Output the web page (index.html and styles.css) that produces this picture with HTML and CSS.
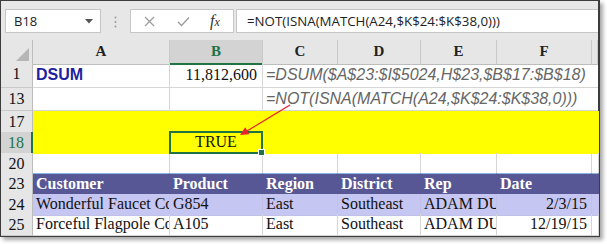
FILE: index.html
```html
<!DOCTYPE html>
<html>
<head>
<meta charset="utf-8">
<link rel="stylesheet" href="styles.css">
</head>
<body>
<div class="window">
  <div class="fbar">
    <div class="namebox">
      <span>B18</span>
      <svg class="caret" width="8" height="5" viewBox="0 0 8 5"><path d="M0 0 H8 L4 4.5 Z" fill="#555"/></svg>
    </div>
    <svg class="grip" width="3" height="12" viewBox="0 0 3 12"><circle cx="1.5" cy="1.5" r="1" fill="#9a9a9a"/><circle cx="1.5" cy="6" r="1" fill="#9a9a9a"/><circle cx="1.5" cy="10.5" r="1" fill="#9a9a9a"/></svg>
    <div class="fbtns">
      <svg width="11" height="11" viewBox="0 0 11 11"><path d="M1 1 L10 10 M10 1 L1 10" stroke="#9c9c9c" stroke-width="1.3" fill="none"/></svg>
      <svg width="13" height="11" viewBox="0 0 13 11"><path d="M1 6 L4.5 9.5 L12 1.5" stroke="#9c9c9c" stroke-width="1.3" fill="none"/></svg>
      <span class="fx"><span class="fx-f">f</span><span class="fx-x">x</span></span>
    </div>
    <div class="finput">=NOT(ISNA(MATCH(A24,$K$24:$K$38,0)))</div>
  </div>

  <div class="sheet">
    <div class="row hdr">
      <div class="corner"><svg width="13" height="13" viewBox="0 0 13 13"><path d="M13 0 V13 H0 Z" fill="#b6b6b6"/></svg></div>
      <div class="ch">A</div>
      <div class="ch sel">B</div>
      <div class="ch">C</div>
      <div class="ch">D</div>
      <div class="ch">E</div>
      <div class="ch">F</div>
      <div class="ch"></div>
    </div>

    <div class="row r1">
      <div class="rh">1</div>
      <div class="c dsum">DSUM</div>
      <div class="c num">11,812,600</div>
      <div class="c formula span">=DSUM($A$23:$I$5024,H$23,$B$17:$B$18)</div>
    </div>

    <div class="row r13">
      <div class="rh">13</div>
      <div class="c"></div>
      <div class="c"></div>
      <div class="c formula span">=NOT(ISNA(MATCH(A24,$K$24:$K$38,0)))</div>
    </div>

    <div class="row r17 yellow">
      <div class="rh">17</div>
      <div class="c"></div><div class="c"></div><div class="c"></div><div class="c"></div><div class="c"></div><div class="c"></div><div class="c"></div>
    </div>

    <div class="row r18 yellow">
      <div class="rh sel">18</div>
      <div class="c"></div>
      <div class="c active">TRUE</div>
      <div class="c"></div><div class="c"></div><div class="c"></div><div class="c"></div><div class="c"></div>
    </div>

    <div class="row r20">
      <div class="rh">20</div>
      <div class="c"></div><div class="c"></div><div class="c"></div><div class="c"></div><div class="c"></div><div class="c"></div><div class="c"></div>
    </div>

    <div class="row r23 thead">
      <div class="rh">23</div>
      <div class="c">Customer</div>
      <div class="c">Product</div>
      <div class="c">Region</div>
      <div class="c">District</div>
      <div class="c">Rep</div>
      <div class="c">Date</div>
      <div class="c"></div>
    </div>

    <div class="row r24 band">
      <div class="rh">24</div>
      <div class="c">Wonderful Faucet Co</div>
      <div class="c">G854</div>
      <div class="c">East</div>
      <div class="c">Southeast</div>
      <div class="c">ADAM DUN</div>
      <div class="c right">2/3/15</div>
      <div class="c"></div>
    </div>

    <div class="row r25">
      <div class="rh">25</div>
      <div class="c">Forceful Flagpole Co</div>
      <div class="c">A105</div>
      <div class="c">East</div>
      <div class="c">Southeast</div>
      <div class="c">ADAM DUN</div>
      <div class="c right">12/19/15</div>
      <div class="c"></div>
    </div>
  </div>

  <svg class="arrow" width="607" height="244" viewBox="0 0 607 244">
    <line x1="290" y1="105" x2="247" y2="131" stroke="#e8232b" stroke-width="1.4"/>
    <path d="M240 135 L245.2 127.3 L249.4 134.2 Z" fill="#e8232b"/>
  </svg>
</div>
</body>
</html>
```
FILE: styles.css
```css
* { box-sizing: border-box; }
html, body { margin: 0; padding: 0; background: #fff; }
body { width: 607px; height: 244px; overflow: hidden; }

.window {
  position: relative;
  width: 600px;
  height: 237px;
  border-style: solid;
  border-color: #3c3c3c;
  border-width: 1px 2px 2px 1px;
  box-shadow: 3px 3px 4px rgba(0,0,0,0.35);
  background: #fff;
  display: flex;
  flex-direction: column;
}

/* ---------- formula bar ---------- */
.fbar {
  height: 39px;
  flex: none;
  background: #e7e7e7;
  display: flex;
  align-items: flex-start;
  padding: 8px 0 0 4px;
  font-family: "Open Sans", "Noto Sans", sans-serif;
  font-size: 13px;
  color: #222;
}
.namebox {
  width: 96px;
  height: 24px;
  background: #fff;
  border: 1px solid #c6c6c6;
  display: flex;
  align-items: center;
  justify-content: space-between;
  padding: 0 7px 0 8px;
}
.grip { margin: 7px 0 0 13px; }
.fbtns {
  margin-left: 13px;
  width: 104px;
  height: 24px;
  background: #fff;
  border: 1px solid #c6c6c6;
  display: flex;
  align-items: center;
  padding-left: 13px;
  gap: 22px;
}
.fx { font-family: "Liberation Serif", serif; font-style: italic; color: #333; margin-left: -2px; }
.fx-f { font-size: 16px; }
.fx-x { font-size: 12px; }
.finput {
  margin-left: 2px;
  flex: 1;
  height: 24px;
  background: #fff;
  border: 1px solid #c6c6c6;
  border-right: none;
  padding-left: 10px;
  line-height: 22px;
  font-size: 13.3px;
  white-space: nowrap;
}

/* ---------- sheet ---------- */
.sheet { flex: 1; display: flex; flex-direction: column; }
.row {
  display: grid;
  grid-template-columns: 32px 137px 93px 75px 83px 76px 95px 1fr;
  font-family: "Liberation Serif", serif;
  font-size: 16px;
  color: #111;
}
.hdr { height: 23px; }
.r1 { height: 25px; }
.r13 { height: 23px; }
.r17, .r18, .r23, .r25 { height: 21px; }
.r20, .r24 { height: 20px; }

.corner {
  background: #e6e6e6;
  border-right: 1px solid #bdbdbd;
  border-bottom: 1px solid #bdbdbd;
  display: flex;
  align-items: flex-end;
  justify-content: flex-end;
  padding: 0 3px 3px 0;
}
.ch {
  background: #e6e6e6;
  border-right: 1px solid #c9c9c9;
  border-bottom: 1px solid #bdbdbd;
  text-align: center;
  font-weight: bold;
  font-size: 15px;
  line-height: 23px;
  color: #222;
}
.ch.sel {
  background: #d3d3d3;
  color: #217346;
  border-bottom: 2px solid #217346;
}
.rh {
  background: #e6e6e6;
  border-right: 1px solid #bdbdbd;
  border-bottom: 1px solid #c9c9c9;
  text-align: center;
  line-height: 20px;
  padding-top: 1px;
}
.rh.sel {
  background: #d3d3d3;
  color: #217346;
  border-right: 2px solid #217346;
}

.c {
  border-right: 1px solid #d6d6d6;
  border-bottom: 1px solid #d6d6d6;
  white-space: nowrap;
  overflow: hidden;
  padding: 0 3px;
  line-height: 20px;
}
.right { text-align: right; padding-right: 4px; }
.span { grid-column: 4 / -1; border-right: none; }

.r1 .c { line-height: 24px; }
.r13 .c { line-height: 22px; }

.dsum {
  font-family: "Liberation Sans", sans-serif;
  font-weight: bold;
  color: #1f1fa0;
  font-size: 16px;
}
.num { text-align: right; padding-right: 5px; }
.formula {
  font-family: "Liberation Sans", sans-serif;
  font-style: italic;
  font-size: 16px;
  color: #666;
  overflow: visible;
}

.yellow .c { background: #ffff00; border-color: #ffff00; }
.active {
  position: relative;
  overflow: visible;
  text-align: center;
  z-index: 1;
}
.active::before {
  content: "";
  position: absolute;
  left: -1px; top: -1px; right: -1px; bottom: -1px;
  border: 2px solid #217346;
}
.active::after {
  content: "";
  position: absolute;
  right: -3px; bottom: -3px;
  width: 5px; height: 5px;
  background: #217346;
  border: 1px solid #fff;
}

.thead .c {
  background: #575795;
  border-color: #575795;
  color: #fff;
  font-weight: bold;
  border-top: 1px solid #8fb4e0;
  line-height: 19px;
}
.band .c { background: #c6c6f2; border-color: #c0c0e8; }
.band .c:first-child { border-color: #c6c6f2; }

.arrow {
  position: absolute;
  left: -1px;
  top: -1px;
  pointer-events: none;
  z-index: 5;
}
```
